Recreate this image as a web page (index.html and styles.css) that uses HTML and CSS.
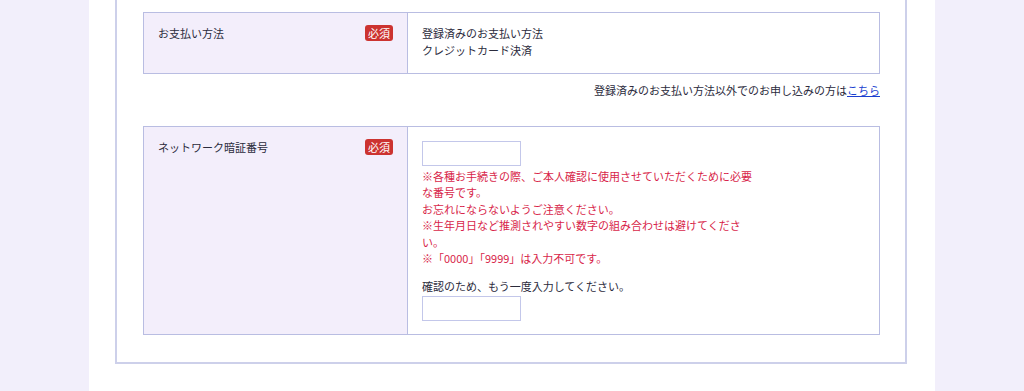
FILE: index.html
```html
<!DOCTYPE html>
<html lang="ja">
<head>
    <meta charset="UTF-8">
    <meta name="viewport" content="width=device-width, initial-scale=1.0">
    <title>お申し込み内容の入力</title>
    <link rel="stylesheet" href="styles.css">
</head>
<body>

    <div class="page">
        <div class="formBox">

            <table class="formTable">
                <tr>
                    <th>お支払い方法<span class="required">必須</span></th>
                    <td class="payCell">
                        登録済みのお支払い方法<br>
                        クレジットカード決済
                    </td>
                </tr>
            </table>

            <p class="otherLink">登録済みのお支払い方法以外でのお申し込みの方は<a href="#">こちら</a></p>

            <table class="formTable">
                <tr>
                    <th>ネットワーク暗証番号<span class="required">必須</span></th>
                    <td class="pinCell">
                        <input type="password" class="pinInput">
                        <p class="note">
                            ※各種お手続きの際、ご本人確認に使用させていただくために必要な番号です。<br>
                            お忘れにならないようご注意ください。<br>
                            ※生年月日など推測されやすい数字の組み合わせは避けてください。<br>
                            ※「0000」「9999」は入力不可です。
                        </p>
                        <p class="confirmLabel">確認のため、もう一度入力してください。</p>
                        <input type="password" class="pinInput">
                    </td>
                </tr>
            </table>

        </div>
    </div>

</body>
</html>
```

FILE: styles.css
```css
body {
    margin: 0;
    font-family: "Noto Sans CJK JP", "Noto Sans", sans-serif;
    font-size: 11px;
    line-height: 1.5;
    color: #2b2b3c;
    background-color: #f2effb;
}

.page {
    width: 846px;
    min-height: 391px;
    margin: 0 auto;
    padding: 0 28px 0 26px;
    box-sizing: border-box;
    background-color: #fff;
}

.formBox {
    padding: 12px 25px 27px 26px;
    border: 2px solid #cdd0ea;
    border-top: none;
}

.formTable {
    width: 100%;
    border-collapse: collapse;
}

.formTable th, .formTable td {
    border: 1px solid #b9bde2;
    padding: 12px 14px 12px;
    vertical-align: top;
    text-align: left;
}

.formTable th {
    width: 235px;
    font-weight: normal;
    background-color: #f3eefb;
}

.formTable .payCell {
    line-height: 17px;
    padding-bottom: 14px;
}

.formTable .pinCell {
    padding-bottom: 13px;
}

.required {
    float: right;
    padding: 1px 3px;
    line-height: 14px;
    color: #fff;
    background-color: #cc3330;
    border-radius: 3px;
}

.otherLink {
    margin: 8px 0 27px;
    text-align: right;
}

.otherLink a {
    color: #1b3fd0;
}

.pinInput {
    display: block;
    width: 99px;
    height: 25px;
    margin: 2px 0 0;
    padding: 0 4px;
    box-sizing: border-box;
    border: 1px solid #c3c7ea;
    border-radius: 0;
}

.note {
    width: 334px;
    margin: 2px 0 0;
    color: #d81f4a;
}

.confirmLabel {
    margin: 11px 0 0;
}
```
